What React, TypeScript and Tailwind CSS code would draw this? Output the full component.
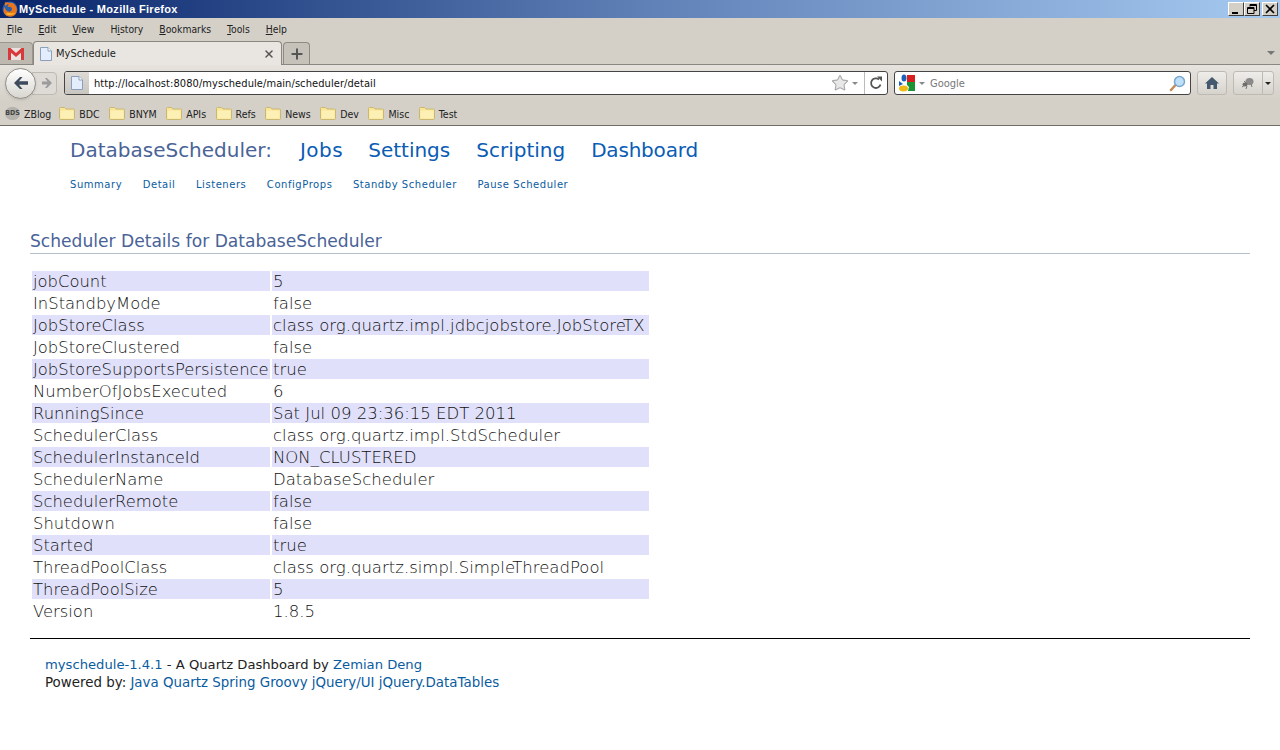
import { Star, Plus, X } from "lucide-react";

const details: [string, string][] = [
  ["jobCount", "5"],
  ["InStandbyMode", "false"],
  ["JobStoreClass", "class org.quartz.impl.jdbcjobstore.JobStoreTX"],
  ["JobStoreClustered", "false"],
  ["JobStoreSupportsPersistence", "true"],
  ["NumberOfJobsExecuted", "6"],
  ["RunningSince", "Sat Jul 09 23:36:15 EDT 2011"],
  ["SchedulerClass", "class org.quartz.impl.StdScheduler"],
  ["SchedulerInstanceId", "NON_CLUSTERED"],
  ["SchedulerName", "DatabaseScheduler"],
  ["SchedulerRemote", "false"],
  ["Shutdown", "false"],
  ["Started", "true"],
  ["ThreadPoolClass", "class org.quartz.simpl.SimpleThreadPool"],
  ["ThreadPoolSize", "5"],
  ["Version", "1.8.5"],
];

const menus: [string, string][] = [
  ["F", "ile"],
  ["E", "dit"],
  ["V", "iew"],
  ["Hi", "story"],
  ["B", "ookmarks"],
  ["T", "ools"],
  ["H", "elp"],
];

const bookmarks = ["BDC", "BNYM", "APIs", "Refs", "News", "Dev", "Misc", "Test"];

function PageIcon({ className }: { className?: string }) {
  return (
    <svg viewBox="0 0 14 16" className={className}>
      <path d="M1.500 1.500h7.500l3.500 3.500v9.500h-11z" fill="#e3edfb" stroke="#8aa0bd" />
      <path d="M9 1.500v3.500h3.500" fill="#fff" stroke="#8aa0bd" />
    </svg>
  );
}

function Folder() {
  return (
    <svg viewBox="0 0 16 14" className="w-4 h-3.5 shrink-0">
      <path d="M.5 2.500q0-1 1-1h4l1.500 1.500h7.500q1 0 1 1v8.500q0 1-1 1h-13q-1 0-1-1z" fill="#f8e596" stroke="#c9b873" />
      <rect x="1.500" y="4.500" width="13" height="8" fill="#fdf0b4" />
    </svg>
  );
}

function FirefoxLogo() {
  return (
    <svg viewBox="0 0 16 16" className="w-4 h-4 shrink-0">
      <circle cx="8" cy="8" r="7.500" fill="#2f5fa8" />
      <path d="M3 1.500c-.5 2 0 3 .5 3.500C4.500 3.500 6 3 7 3c-1 1-1.500 2-1 3 1.500-.5 4 0 4 2s-2 3-4 2.500C4 10 3 8 3 6 1 8 1 12 4 14.500c3 2 8 1.500 10-2 2-3.500.5-8-2.500-10C10 1.500 8.500 1.500 7.500 2 6 1.500 4 1 3 1.500z" fill="#e8761c" />
      <path d="M4 13c3 2 7 1.500 9.500-1.500-2 .5-4 1-6 .5S5 11.500 4 13z" fill="#f5b32a" />
    </svg>
  );
}

function GmailIcon() {
  return (
    <svg viewBox="0 0 16 12" className="w-4 h-3">
      <rect width="16" height="12" fill="#e9e4df" />
      <path d="M0 0h2.500L8 5l5.500-5H16v12h-3V4.800L8 9 3 4.800V12H0z" fill="#d8393b" />
    </svg>
  );
}

function GoogleIcon() {
  return (
    <svg viewBox="0 0 16 18" className="w-4 h-[18px] shrink-0">
      <ellipse cx="5" cy="4" rx="2.500" ry="3.500" fill="#1c62b9" />
      <path d="M8 1h8v7H8z" fill="#d81e1e" />
      <path d="M8 8h8v9H9l1-4-2-2z" fill="#1a9334" />
      <path d="M0 7l4 3-4 2z" fill="#1c62b9" />
      <ellipse cx="4.500" cy="14.500" rx="4.500" ry="3" fill="#f0b913" />
    </svg>
  );
}

function Magnifier() {
  return (
    <svg viewBox="0 0 17 17" className="w-[17px] h-[17px]">
      <path d="M2 15l4.500-5" stroke="#c58a55" strokeWidth="2.500" strokeLinecap="round" />
      <circle cx="10.500" cy="6.500" r="5" fill="#bfe0fa" stroke="#7aa7cc" strokeWidth="1.500" />
    </svg>
  );
}

function WindowButton({ kind }: { kind: "min" | "max" | "close" }) {
  return (
    <div className="w-4 h-[14px] bg-[#d4d0c8] border-t border-l border-t-white border-l-white border-r border-b border-r-[#404040] border-b-[#404040] flex items-center justify-center">
      <svg viewBox="0 0 10 10" className="w-2.5 h-2.5">
        {kind === "min" && <path d="M1 8h6v2H1z" fill="#000" />}
        {kind === "max" && (
          <path d="M3 .5h6.500v6H7M3 .5v2M3 1.500h6.500M.5 3.500h6.500v6H.5zM.5 4.500h6.500" fill="none" stroke="#000" />
        )}
        {kind === "close" && <path d="M1 1l8 8M9 1l-8 8" stroke="#000" strokeWidth="1.600" />}
      </svg>
    </div>
  );
}

export default function App() {
  return (
    <div className="w-[1280px] h-[750px] overflow-hidden bg-white flex flex-col">
      {/* Window chrome */}
      <div className="font-['DejaVu_Sans_Condensed','Liberation_Sans',sans-serif] text-[11px] text-black">
        <div className="h-[18px] bg-gradient-to-r from-[#0a246a] via-[#5f80b6] to-[#a6caf0] flex items-center pl-0.5 pr-0.5">
          <FirefoxLogo />
          <span className="ml-px text-white font-bold font-['Liberation_Sans',sans-serif] text-[11px] tracking-[0.3px]">MySchedule - Mozilla Firefox</span>
          <div className="ml-auto flex items-center">
            <WindowButton kind="min" />
            <WindowButton kind="max" />
            <div className="w-0.5" />
            <WindowButton kind="close" />
          </div>
        </div>

        <div className="bg-[#d4d0c8]">
          <div className="h-[22px] flex items-center pl-[7px] pt-0.5 gap-4 text-[10.3px] text-[#222]">
            {menus.map(([u, rest]) => (
              <span key={u + rest}>
                {u.length > 1 ? (
                  <>
                    {u[0]}
                    <span className="underline">{u[1]}</span>
                  </>
                ) : (
                  <span className="underline">{u}</span>
                )}
                {rest}
              </span>
            ))}
          </div>

          {/* Tabs */}
          <div className="h-[25px] flex items-end border-b border-[#8a8780] relative">
            <div className="w-[33px] h-[22px] bg-[#bdb9b1] border border-b-0 border-l-0 border-[#9a968e] rounded-tr flex items-center justify-center">
              <GmailIcon />
            </div>
            <div className="w-[249px] h-[24px] -mb-px bg-[#e9e6e1] border border-b-0 border-[#8a8780] rounded-t flex items-center pl-[5px] pr-1.5">
              <PageIcon className="w-3.5 h-4" />
              <span className="ml-[3px] pt-0.5 text-[#222]">MySchedule</span>
              <X className="ml-auto w-3 h-3 text-[#555]" strokeWidth={3} />
            </div>
            <div className="ml-px w-[27px] h-[22px] bg-[#c6c2ba] border border-b-0 border-[#8f8b84] rounded-t flex items-center justify-center">
              <Plus className="w-4 h-4 text-[#555]" strokeWidth={3} />
            </div>
            <svg viewBox="0 0 8 4" className="w-2 h-1 absolute right-[5px] top-[11px]">
              <path d="M0 0h8l-4 4z" fill="#777" />
            </svg>
          </div>

          {/* Navigation */}
          <div className="h-[36px] bg-gradient-to-b from-[#e6e3de] to-[#d4d0c8] flex items-center pl-[5px]">
            <div className="w-[31px] h-[31px] rounded-full bg-gradient-to-b from-white to-[#d9d6d1] border border-[#8f8c86] flex items-center justify-center z-10 shadow">
              <svg viewBox="0 0 16 14" className="w-4 h-3.5">
                <path d="M1 7l6-6h2.500L6 5.200h9v3.600H6L9.500 13H7z" fill="#3c4a5c" />
              </svg>
            </div>
            <div className="w-[25px] h-[23px] -ml-1 bg-[#dedbd6] border border-[#bdbab4] rounded-r flex items-center justify-center">
              <svg viewBox="0 0 12 12" className="w-3 h-3 ml-1">
                <path d="M11 6L6 1H4l2.500 3.500H1v3h5.500L4 11h2z" fill="#9c9c9c" />
              </svg>
            </div>
            <div className="ml-[7px] w-[824px] h-[24px] bg-white border border-[#444] rounded-[3px] flex items-center">
              <div className="w-[24px] h-[22px] bg-gradient-to-b from-[#dedbd6] to-[#c9c6c0] flex items-center justify-center rounded-l-[2px]">
                <PageIcon className="w-3.5 h-4" />
              </div>
              <span className="ml-[5px] pt-[3px] text-[11px] tracking-[0.08px] text-[#111]">http://localhost:8080/myschedule/main/scheduler/detail</span>
              <Star className="ml-auto w-[18px] h-[18px] text-[#aaa] fill-[#e8e8e8]" strokeWidth={1.500} />
              <svg viewBox="0 0 6 3" className="w-1.5 h-[3px] ml-[3px]">
                <path d="M0 0h6l-3 3z" fill="#888" />
              </svg>
              <div className="ml-1.5 w-[23px] h-full border-l border-[#bbb] flex items-center justify-center">
                <svg viewBox="0 0 14 14" className="w-3.5 h-3.5">
                  <path d="M11.500 8.500A4.800 4.800 0 1 1 10 3.500" fill="none" stroke="#555" strokeWidth="1.800" />
                  <path d="M8 .5h5v5z" fill="#555" />
                </svg>
              </div>
            </div>
            <div className="ml-[6px] w-[297px] h-[24px] bg-white border border-[#444] rounded-[3px] flex items-center pl-1 pr-1">
              <GoogleIcon />
              <svg viewBox="0 0 6 3" className="w-1.5 h-[3px] ml-[4px]">
                <path d="M0 0h6l-3 3z" fill="#888" />
              </svg>
              <span className="ml-[5px] pt-[3px] text-[#777]">Google</span>
              <div className="ml-auto">
                <Magnifier />
              </div>
            </div>
            <div className="ml-[6px] w-[30px] h-[24px] bg-gradient-to-b from-[#efedea] to-[#d6d3cd] border border-[#bdbab4] rounded-[3px] flex items-center justify-center">
              <svg viewBox="0 0 14 12" className="w-3.5 h-3">
                <path d="M7 0L0 6.500h2V12h3.500V8h3v4H12V6.500h2z" fill="#44596e" />
              </svg>
            </div>
            <div className="ml-[6px] w-[41px] h-[24px] bg-gradient-to-b from-[#efedea] to-[#d6d3cd] border border-[#bdbab4] rounded-[3px] flex items-center">
              <div className="flex-1 flex items-center justify-center">
                <svg viewBox="0 0 14 12" className="w-3.5 h-3">
                  <ellipse cx="8.500" cy="4.500" rx="4" ry="3.500" fill="#8a8a8a" />
                  <ellipse cx="4" cy="7.500" rx="2.500" ry="2" fill="#6c6c6c" />
                  <path d="M1 10l3-2M6 9l-1 3M10 7l1 3M3 4l2 2" stroke="#777" />
                </svg>
              </div>
              <div className="w-[11px] h-full border-l border-[#bdbab4] flex items-center justify-center">
                <svg viewBox="0 0 6 3" className="w-1.5 h-[3px]">
                  <path d="M0 0h6l-3 3z" fill="#222" />
                </svg>
              </div>
            </div>
          </div>

          {/* Bookmarks */}
          <div className="h-[25px] flex items-center pl-[5px] text-[10.5px] text-[#222] border-b border-[#6f6d66]">
            <span className="w-[15px] h-[13px] bg-[#b5b2ac] rounded-full flex items-center justify-center text-[7px] leading-none font-bold text-[#444]">BDS</span>
            <span className="ml-1 mr-2 pt-[3px]">ZBlog</span>
            {bookmarks.map((b) => (
              <div key={b} className="flex items-center gap-1 mr-[9.500px]">
                <Folder />
                <span className="pt-[3px]">{b}</span>
              </div>
            ))}
          </div>
        </div>
      </div>

      {/* Page */}
      <div className="flex-1 px-[30px] font-['DejaVu_Sans',sans-serif]">
        <div className="pl-10 pt-[9px]">
          <div className="flex items-baseline text-[20px] leading-[30px]">
            <span className="text-[#4a6397]">DatabaseScheduler:</span>
            <a className="ml-[28px] tracking-[0.5px] text-[#0a5cb4]">Jobs</a>
            <a className="ml-[25px] text-[#0a5cb4]">Settings</a>
            <a className="ml-[26px] text-[#0a5cb4]">Scripting</a>
            <a className="ml-[26px] tracking-[-0.2px] text-[#0a5cb4]">Dashboard</a>
          </div>
          <div className="mt-[13px] flex gap-[20.5px] text-[10px] leading-[14px] tracking-[0.55px] text-[#0a5ca0]">
            <a>Summary</a>
            <a>Detail</a>
            <a>Listeners</a>
            <a>ConfigProps</a>
            <a>Standby Scheduler</a>
            <a>Pause Scheduler</a>
          </div>
        </div>

        <h2 className="mt-[39px] pb-0.5 text-[17.1px] leading-[20px] text-[#4a6397] border-b border-[#b5c0cc]">
          Scheduler Details for DatabaseScheduler
        </h2>

        <table className="mt-[15px] border-separate border-spacing-[2px] text-[16.4px] font-light text-[#111]">
          <tbody>
            {details.map(([name, value], i) => (
              <tr key={name} className={i % 2 === 0 ? "bg-[#e0e0fa]" : ""}>
                <td className="w-[238px] h-5 p-0 pl-px pt-px leading-[19px] whitespace-nowrap">{name}</td>
                <td className="w-[377px] h-5 p-0 pl-px pt-px leading-[19px] whitespace-nowrap text-[16.5px]">{value}</td>
              </tr>
            ))}
          </tbody>
        </table>

        <div className="mt-[15px] border-t border-black pt-[17px] pl-[15px] text-[13.4px] leading-[18px] text-[#222]">
          <div className="text-[13.15px]">
            <a className="text-[#0a5ca0]">myschedule-1.4.1</a> - A Quartz Dashboard by{" "}
            <a className="text-[#0a5ca0]">Zemian Deng</a>
          </div>
          <div>
            Powered by: <a className="text-[#0a5ca0]">Java</a> <a className="text-[#0a5ca0]">Quartz</a>{" "}
            <a className="text-[#0a5ca0]">Spring</a> <a className="text-[#0a5ca0]">Groovy</a>{" "}
            <a className="text-[#0a5ca0]">jQuery/UI</a> <a className="text-[#0a5ca0]">jQuery.DataTables</a>
          </div>
        </div>
      </div>
    </div>
  );
}
